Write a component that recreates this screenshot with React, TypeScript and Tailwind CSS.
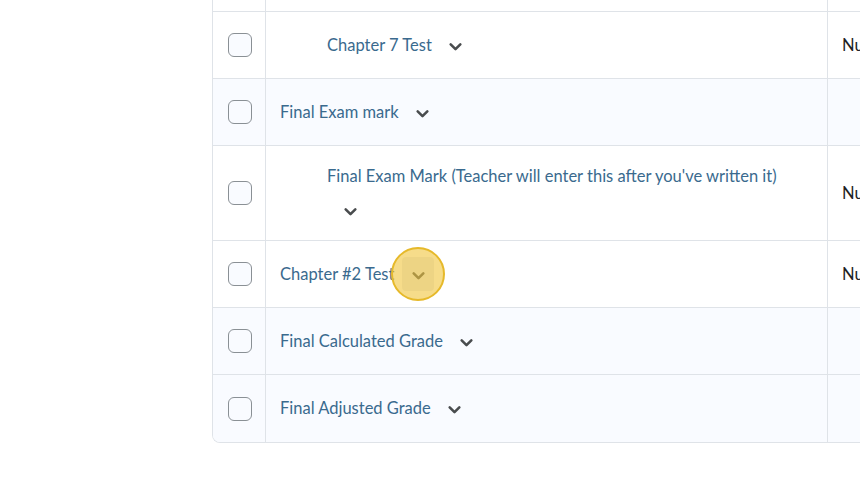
import React from 'react';

type Row = { name: string; indent?: boolean; alt?: boolean; type?: string; tall?: boolean; active?: boolean };

const rows: Row[] = [
  { name: 'Chapter 7 Test', indent: true, type: 'Nu' },
  { name: 'Final Exam mark', alt: true },
  { name: "Final Exam Mark (Teacher will enter this after you've written it)", indent: true, type: 'Nu', tall: true },
  { name: 'Chapter #2 Test', type: 'Nu', active: true },
  { name: 'Final Calculated Grade', alt: true },
  { name: 'Final Adjusted Grade', alt: true },
];

function Chevron() {
  return (
    <svg width="15" height="15" viewBox="0 0 14 14" fill="none">
      <path d="M2.5 5l4.5 4.5L11.5 5" stroke="#494c4e" strokeWidth="2.4" strokeLinecap="round" strokeLinejoin="round" />
    </svg>
  );
}

function ChevronButton({ active }: { active?: boolean }) {
  return (
    <span className="relative ml-[8px] inline-flex h-[34px] w-[32px] items-center justify-center rounded">
      {active && <span className="absolute inset-0 rounded bg-[#e9ecef]" />}
      <span className="relative mt-[2px]"><Chevron /></span>
      {active && (
        <span className="absolute left-1/2 top-1/2 h-[54px] w-[54px] -translate-x-1/2 -translate-y-1/2 rounded-full border-2 border-[#e6b92a] bg-[#f0c53c]/60" />
      )}
    </span>
  );
}

export default function App() {
  return (
    <div className="h-[482px] w-[860px] overflow-hidden bg-white" style={{ fontFamily: 'Lato, "Noto Sans", sans-serif' }}>
      <div className="ml-[212px] w-[720px] overflow-hidden rounded-bl-lg border-b border-l border-[#dfe3e8]">
        <div className="grid h-[12px] grid-cols-[53px_562px_1fr] border-b border-[#dfe3e8]">
          <div className="border-r border-[#dfe3e8]" />
          <div className="border-r border-[#dfe3e8]" />
          <div />
        </div>
        {rows.map((r, i) => (
          <div
            key={i}
            className={`grid grid-cols-[53px_562px_1fr] ${i < rows.length - 1 ? 'border-b border-[#dfe3e8]' : ''} ${r.alt ? 'bg-[#f9fbff]' : 'bg-white'} ${r.tall ? 'h-[95px]' : 'h-[67px]'}`}
          >
            <div className="flex items-center justify-center border-r border-[#dfe3e8] pl-[1px]">
              <span className="h-[24px] w-[24px] rounded-[6px] border border-[#8a9095] bg-[#f9fbff]" />
            </div>
            <div className={`flex items-center border-r border-[#dfe3e8] ${r.indent ? 'pl-[61px]' : 'pl-[14px]'} pr-4`}>
              {r.tall ? (
                <div className="flex flex-col">
                  <span className="flex h-[34px] items-center text-[16.5px] text-[#3a6a8e]">{r.name}</span>
                  <span className="flex h-[34px] items-center">
                    <span className="-ml-[1px]"><ChevronButton /></span>
                  </span>
                </div>
              ) : (
                <div className="flex items-center">
                  <span className="text-[16.5px] text-[#3a6a8e]">{r.name}</span>
                  <ChevronButton active={r.active} />
                </div>
              )}
            </div>
            <div className="flex items-center pl-[14px] text-[16.5px] text-[#202122]">{r.type}</div>
          </div>
        ))}
      </div>
    </div>
  );
}
